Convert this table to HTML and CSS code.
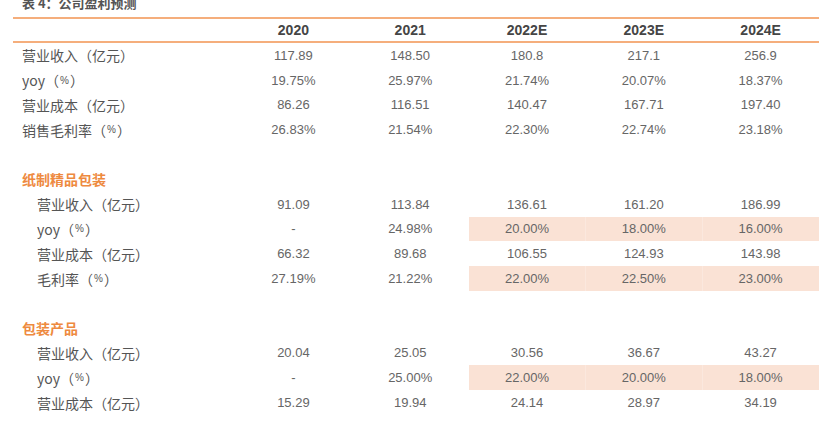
FILE: index.html
```html
<!DOCTYPE html>
<html lang="zh-CN">
<head>
<meta charset="utf-8">
<link rel="stylesheet" href="styles.css">
</head>
<body>
<div class="page">
  <div class="title">表 4：公司盈利预测</div>
  <div class="table">
    <div class="row head">
      <div class="label"></div>
      <div class="cell">2020</div>
      <div class="cell">2021</div>
      <div class="cell">2022E</div>
      <div class="cell">2023E</div>
      <div class="cell">2024E</div>
    </div>
    <div class="row">
      <div class="label">营业收入（亿元）</div>
      <div class="cell">117.89</div><div class="cell">148.50</div><div class="cell">180.8</div><div class="cell">217.1</div><div class="cell">256.9</div>
    </div>
    <div class="row">
      <div class="label">yoy（<span class="pct">%</span>）</div>
      <div class="cell">19.75%</div><div class="cell">25.97%</div><div class="cell">21.74%</div><div class="cell">20.07%</div><div class="cell">18.37%</div>
    </div>
    <div class="row">
      <div class="label">营业成本（亿元）</div>
      <div class="cell">86.26</div><div class="cell">116.51</div><div class="cell">140.47</div><div class="cell">167.71</div><div class="cell">197.40</div>
    </div>
    <div class="row">
      <div class="label">销售毛利率（<span class="pct">%</span>）</div>
      <div class="cell">26.83%</div><div class="cell">21.54%</div><div class="cell">22.30%</div><div class="cell">22.74%</div><div class="cell">23.18%</div>
    </div>
    <div class="row blank"></div>
    <div class="row">
      <div class="label section">纸制精品包装</div>
    </div>
    <div class="row">
      <div class="label sub">营业收入（亿元）</div>
      <div class="cell">91.09</div><div class="cell">113.84</div><div class="cell">136.61</div><div class="cell">161.20</div><div class="cell">186.99</div>
    </div>
    <div class="row">
      <div class="label sub">yoy（<span class="pct">%</span>）</div>
      <div class="cell">-</div><div class="cell">24.98%</div><div class="cell hl">20.00%</div><div class="cell hl">18.00%</div><div class="cell hl">16.00%</div>
    </div>
    <div class="row">
      <div class="label sub">营业成本（亿元）</div>
      <div class="cell">66.32</div><div class="cell">89.68</div><div class="cell">106.55</div><div class="cell">124.93</div><div class="cell">143.98</div>
    </div>
    <div class="row">
      <div class="label sub">毛利率（<span class="pct">%</span>）</div>
      <div class="cell">27.19%</div><div class="cell">21.22%</div><div class="cell hl">22.00%</div><div class="cell hl">22.50%</div><div class="cell hl">23.00%</div>
    </div>
    <div class="row blank"></div>
    <div class="row">
      <div class="label section">包装产品</div>
    </div>
    <div class="row">
      <div class="label sub">营业收入（亿元）</div>
      <div class="cell">20.04</div><div class="cell">25.05</div><div class="cell">30.56</div><div class="cell">36.67</div><div class="cell">43.27</div>
    </div>
    <div class="row">
      <div class="label sub">yoy（<span class="pct">%</span>）</div>
      <div class="cell">-</div><div class="cell">25.00%</div><div class="cell hl">22.00%</div><div class="cell hl">20.00%</div><div class="cell hl">18.00%</div>
    </div>
    <div class="row">
      <div class="label sub">营业成本（亿元）</div>
      <div class="cell">15.29</div><div class="cell">19.94</div><div class="cell">24.14</div><div class="cell">28.97</div><div class="cell">34.19</div>
    </div>
  </div>
</div>
</body>
</html>
```
FILE: styles.css
```css
html, body {
  margin: 0;
  padding: 0;
  background: #ffffff;
}
body {
  font-family: "Liberation Sans", "Noto Sans CJK SC", sans-serif;
  color: #595959;
  overflow: hidden;
}
.page {
  width: 826px;
  height: 442px;
  padding-left: 13px;
  box-sizing: border-box;
}
.title {
  margin-top: -5px;
  padding-left: 9px;
  height: 16px;
  line-height: 16px;
  font-size: 13px;
  font-weight: bold;
  color: #555555;
  font-family: "Noto Sans CJK SC", "Liberation Sans", sans-serif;
}
.table {
  margin-top: 6px;
  width: 806px;
}
.row {
  display: grid;
  grid-template-columns: 222px repeat(5, 116.8px);
  height: 24.8px;
  align-items: stretch;
}
.row.head {
  height: 22px;
  border-top: 2px solid #F5AE7C;
  border-bottom: 2px solid #F5AE7C;
}
.head .cell {
  font-size: 14px;
  font-weight: bold;
  color: #454545;
}
.label {
  display: flex;
  align-items: center;
  padding-left: 9px;
  font-size: 14px;
  font-family: "Noto Sans CJK SC", "Liberation Sans", sans-serif;
  color: #555555;
  white-space: nowrap;
}
.label.sub {
  padding-left: 24px;
}
.label.section {
  font-weight: bold;
  color: #EE8A3F;
  font-size: 14px;
}
.pct {
  font-size: 10px;
  font-family: "Liberation Sans", sans-serif;
  padding: 0 1px;
}
.cell {
  display: flex;
  align-items: center;
  justify-content: center;
  font-size: 13px;
  color: #666666;
}
.cell.hl {
  background: #FAE2D5;
}
.cell.hl + .cell.hl {
  box-shadow: inset 1px 0 0 #fbe8de;
}
```
